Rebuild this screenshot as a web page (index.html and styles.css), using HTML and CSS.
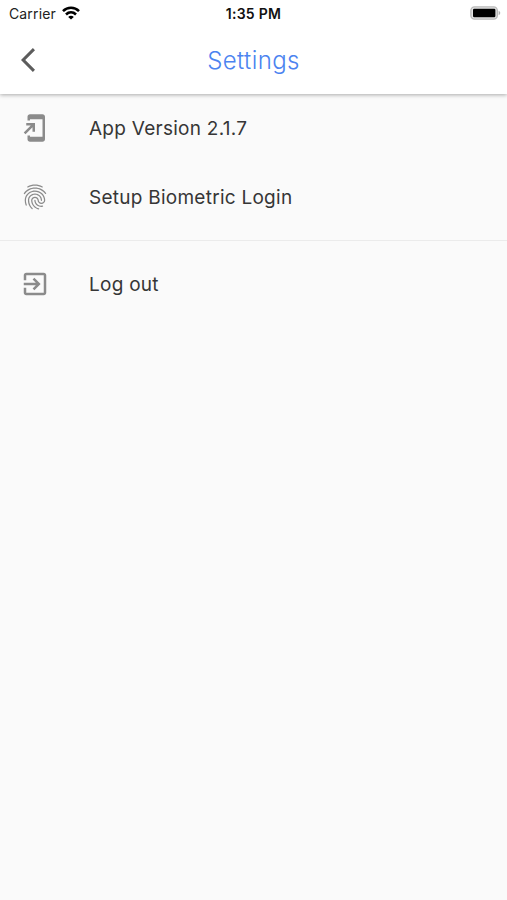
FILE: index.html
```html
<!DOCTYPE html>
<html lang="en">
<head>
<meta charset="utf-8">
<title>Settings</title>
<link rel="stylesheet" href="styles.css">
</head>
<body>
<header class="header">
  <div class="status">
    <div class="carrier"><span class="carrier-name">Carrier</span>
      <svg class="wifi" viewBox="0 0 18 14" fill="none" stroke="#000" stroke-width="2.6"><path d="M1 5.1C5.5.7 12.5.7 17 5.1"/><path d="M4 8.5c2.9-2.8 7.1-2.8 10 0"/><path d="M9 13.6L6.2 10.9c1.6-1.4 4-1.4 5.6 0z" fill="#000" stroke="none"/></svg>
    </div>
    <div class="time">1:35 PM</div>
    <svg class="battery" viewBox="0 0 31 14"><rect x=".9" y=".9" width="26.4" height="12.2" rx="3.6" fill="#e4e4e4" stroke="#b9b9b9" stroke-width="1.4"/><rect x="3" y="2.8" width="22.4" height="8.4" rx="1.2" fill="#000"/><path d="M28.6 4.8c2.2.8 2.2 3.6 0 4.4z" fill="#b0b0b0"/></svg>
  </div>
  <div class="bar">
    <svg class="back" viewBox="0 2.1 11.67 19.8" fill="#5c5c5c"><path d="M11.67 3.87L9.9 2.1 0 12l9.9 9.9 1.77-1.77L3.54 12z"/></svg>
    <h1 class="title">Settings</h1>
  </div>
</header>
<main class="list">
  <div class="item">
    <svg class="icon" viewBox="0 0 24 24"><path d="M18 1.01L8 1c-1.1 0-2 .9-2 2v3h2V5h10v14H8v-1H6v3c0 1.1.9 2 2 2h10c1.1 0 2-.9 2-2V3c0-1.1-.9-1.99-2-1.99zM10 15h2V8H5v2h3.59L3 15.59 4.41 17 10 11.41z"/></svg>
    <span class="label">App Version 2.1.7</span>
  </div>
  <div class="item">
    <svg class="icon" viewBox="0 0 24 24"><path d="M17.81 4.47c-.08 0-.16-.02-.23-.06C15.66 3.42 14 3 12.01 3c-1.98 0-3.86.47-5.57 1.41-.24.13-.54.04-.68-.2-.13-.24-.04-.55.2-.68C7.82 2.52 9.86 2 12.01 2c2.13 0 3.99.47 6.03 1.52.25.13.34.43.21.67-.09.18-.26.28-.44.28zM3.5 9.72c-.1 0-.2-.03-.29-.09-.23-.16-.28-.47-.12-.7.99-1.4 2.25-2.5 3.75-3.27C9.98 4.04 14 4.03 17.15 5.65c1.5.77 2.76 1.86 3.75 3.25.16.22.11.54-.12.7-.23.16-.54.11-.7-.12-.9-1.26-2.04-2.25-3.39-2.94-2.87-1.47-6.54-1.47-9.4.01-1.36.7-2.5 1.7-3.4 2.96-.08.14-.23.21-.39.21zm6.25 12.07c-.13 0-.26-.05-.35-.15-.87-.87-1.34-1.43-2.01-2.64-.69-1.23-1.05-2.73-1.05-4.34 0-2.97 2.54-5.39 5.66-5.39s5.66 2.42 5.66 5.39c0 .28-.22.5-.5.5s-.5-.22-.5-.5c0-2.42-2.09-4.39-4.66-4.39-2.57 0-4.66 1.97-4.66 4.39 0 1.44.32 2.77.93 3.85.64 1.15 1.08 1.64 1.85 2.42.19.2.19.51 0 .71-.11.1-.24.15-.37.15zm7.17-1.85c-1.19 0-2.24-.3-3.1-.89-1.49-1.01-2.38-2.65-2.38-4.39 0-.28.22-.5.5-.5s.5.22.5.5c0 1.41.72 2.74 1.94 3.56.71.48 1.54.71 2.54.71.24 0 .64-.03 1.04-.1.27-.05.53.13.58.41.05.27-.13.53-.41.58-.57.11-1.07.12-1.21.12zM14.91 22c-.04 0-.09-.01-.13-.02-1.59-.44-2.63-1.03-3.72-2.1-1.4-1.39-2.17-3.24-2.17-5.22 0-1.62 1.38-2.94 3.08-2.94 1.7 0 3.08 1.32 3.08 2.94 0 1.07.93 1.94 2.08 1.94s2.08-.87 2.08-1.94c0-3.77-3.25-6.83-7.25-6.83-2.84 0-5.44 1.58-6.61 4.03-.39.81-.59 1.76-.59 2.8 0 .78.07 2.01.67 3.61.1.26-.03.55-.29.64-.26.1-.55-.04-.64-.29-.49-1.31-.73-2.61-.73-3.96 0-1.2.23-2.29.68-3.24 1.33-2.79 4.28-4.6 7.51-4.6 4.55 0 8.25 3.51 8.25 7.83 0 1.62-1.38 2.94-3.08 2.94s-3.08-1.32-3.08-2.94c0-1.07-.93-1.94-2.08-1.94s-2.08.87-2.08 1.94c0 1.71.66 3.31 1.87 4.51.95.94 1.86 1.46 3.27 1.85.27.07.42.35.35.61-.05.23-.26.38-.47.38z"/></svg>
    <span class="label">Setup Biometric Login</span>
  </div>
  <hr class="divider">
  <div class="item">
    <svg class="icon" viewBox="0 0 24 24"><path d="M10.09 15.59L11.5 17l5-5-5-5-1.41 1.41L12.67 11H3v2h9.67l-2.58 2.59zM19 3H5c-1.11 0-2 .9-2 2v4h2V5h14v14H5v-4H3v4c0 1.1.89 2 2 2h14c1.1 0 2-.9 2-2V5c0-1.1-.9-2-2-2z"/></svg>
    <span class="label">Log out</span>
  </div>
</main>
</body>
</html>
```
FILE: styles.css
```css
* { box-sizing: border-box; }
body {
  margin: 0;
  min-height: 900px;
  background: #fafafa;
  color: #363636;
  font-family: Inter, "Liberation Sans", sans-serif;
}
.header {
  position: relative;
  height: 94px;
  background: #fff;
  box-shadow: 0 1px 4px rgba(0, 0, 0, .32);
}
.status {
  display: grid;
  grid-template-columns: 1fr auto 1fr;
  align-items: center;
  height: 27px;
  padding: 0 6px 0 9px;
  color: #111;
  font-size: 14px;
}
.carrier { display: flex; align-items: center; gap: 6px; color: #222; letter-spacing: .14px; }
.wifi { width: 18px; height: 14px; margin-top: -1px; }
.time { margin-right: 3px; font-size: 14px; font-weight: 600; letter-spacing: .3px; }
.battery { width: 31px; height: 14px; margin-top: -1px; justify-self: end; }
.bar {
  display: grid;
  grid-template-columns: 1fr auto 1fr;
  align-items: center;
  height: 65px;
  padding: 0 21px;
}
.back { width: 14px; height: 24px; }
.title {
  margin: 2px 0 0;
  color: #4b83f0;
  font-size: 24px;
  font-weight: 300;
  line-height: 30px;
  letter-spacing: .4px;
}
.list { display: flex; flex-direction: column; }
.item {
  display: flex;
  align-items: center;
  gap: 39px;
  height: 68.5px;
  padding: 0 20px;
}
.icon { flex: none; width: 30px; height: 30px; fill: #8b8b8b; }
.label { padding-top: 2px; font-size: 19px; line-height: 26px; letter-spacing: .26px; }
.divider {
  width: 100%;
  height: 1px;
  margin: 9px 0;
  border: 0;
  background: #ebebeb;
}
```
